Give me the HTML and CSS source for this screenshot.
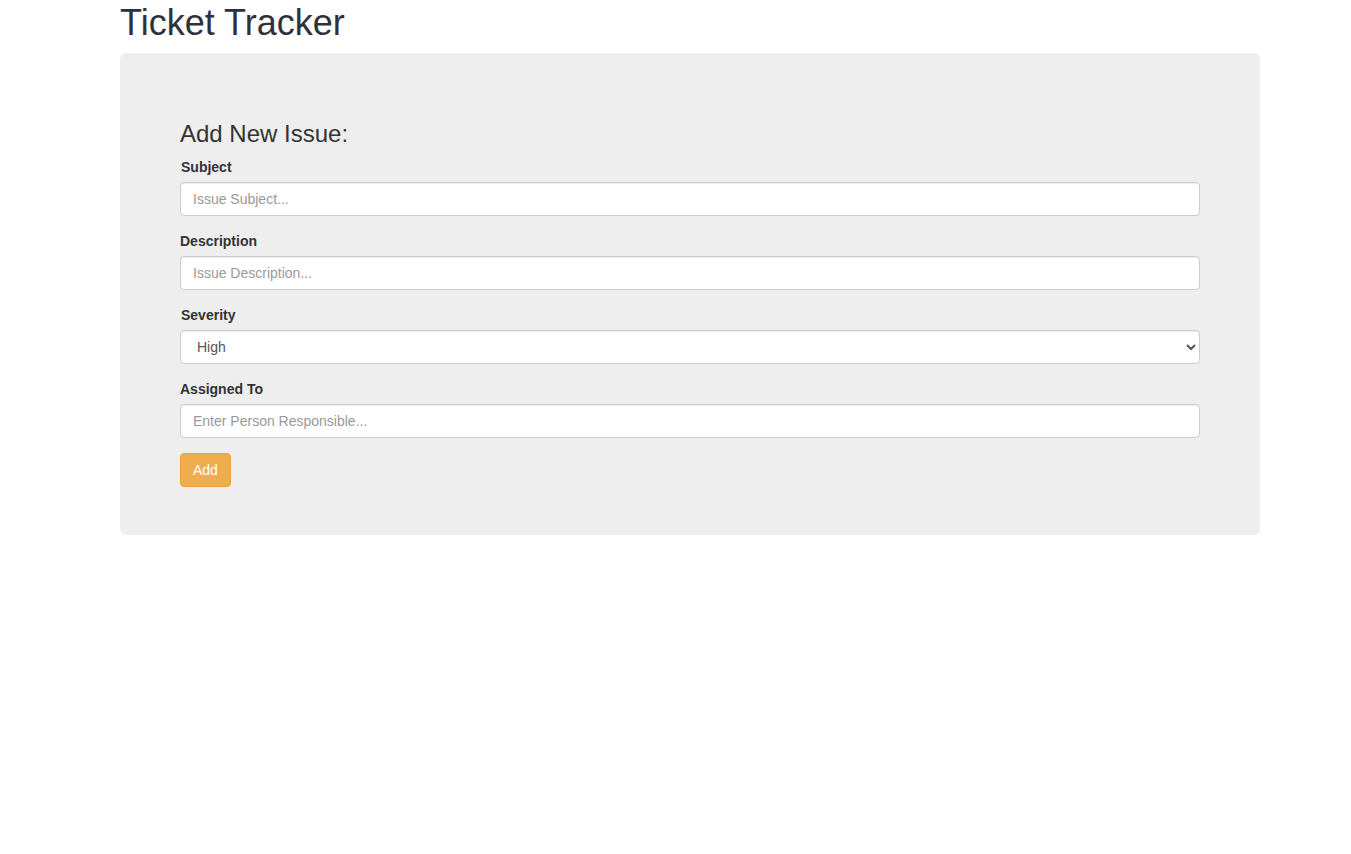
FILE: index.html
```html
<!DOCTYPE html>
<html>
<head>
<meta charset="utf-8">
<title>Ticket Tracker</title>
<link rel="stylesheet" href="styles.css">
</head>
<body>
<div class="container">
  <h1 class="title">Ticket Tracker</h1>
  <div class="jumbotron">
    <h3 class="form-title">Add New Issue:</h3>
    <form class="issue-form">
      <div class="form-group">
        <label class="lbl lbl-nudge">Subject</label>
        <input class="form-control" type="text" placeholder="Issue Subject...">
      </div>
      <div class="form-group">
        <label class="lbl">Description</label>
        <input class="form-control" type="text" placeholder="Issue Description...">
      </div>
      <div class="form-group">
        <label class="lbl lbl-nudge">Severity</label>
        <select class="form-control select">
          <option>High</option>
          <option>Medium</option>
          <option>Low</option>
        </select>
      </div>
      <div class="form-group">
        <label class="lbl">Assigned To</label>
        <input class="form-control" type="text" placeholder="Enter Person Responsible...">
      </div>
      <button type="button" class="btn-warning">Add</button>
    </form>
  </div>
</div>
</body>
</html>
```
FILE: styles.css
```css
* { box-sizing: border-box; }
html, body {
  margin: 0;
  padding: 0;
  background: #fff;
}
body {
  font-family: "Liberation Sans", Arial, sans-serif;
  font-size: 14px;
  line-height: 1.42857143;
  color: #333;
}
.container {
  width: 1140px;
  margin-left: 120px;
}
.title {
  font-size: 36px;
  font-weight: 500;
  line-height: 1.1;
  margin: 0 0 10.4px;
  padding-top: 3px;
  color: #30303a;
}
.jumbotron {
  background: #eee;
  border-radius: 6px;
  padding: 48px 60px;
}
.form-title {
  font-size: 24px;
  font-weight: 500;
  line-height: 1.1;
  margin: 20px 0 10px;
  color: #333;
}
.form-group {
  margin-bottom: 15px;
}
.lbl {
  display: block;
  font-weight: bold;
  margin-bottom: 5px;
  max-width: 100%;
}
.lbl-nudge { padding-left: 1px; }
.form-control {
  display: block;
  width: 100%;
  height: 34px;
  padding: 6px 12px;
  font-family: inherit;
  font-size: 14px;
  line-height: 1.42857143;
  color: #555;
  background: #fff;
  border: 1px solid #ccc;
  border-radius: 4px;
  box-shadow: inset 0 1px 1px rgba(0,0,0,.075);
}
.form-control::placeholder { color: #999; }
.select { padding-left: 12px; }
.btn-warning {
  display: inline-block;
  height: 34px;
  padding: 6px 12px;
  font-family: inherit;
  font-size: 14px;
  line-height: 1.42857143;
  color: #fff;
  background: #f0ad4e;
  border: 1px solid #eea236;
  border-radius: 4px;
  cursor: pointer;
}
```
